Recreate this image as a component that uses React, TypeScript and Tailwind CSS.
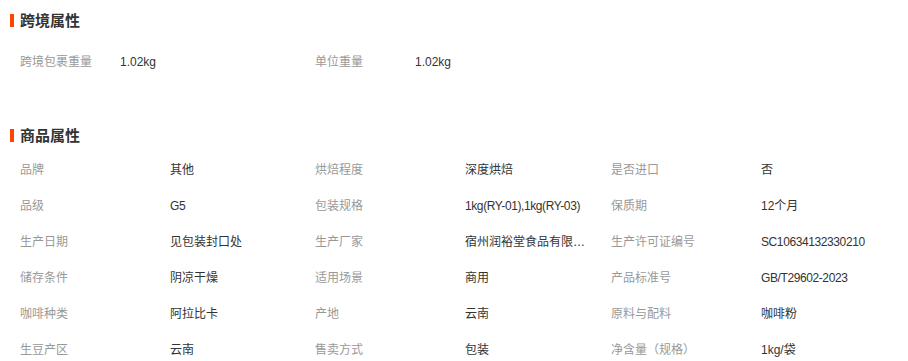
import React from "react";

const font = { fontFamily: '"Liberation Sans", "Noto Sans CJK SC", sans-serif' };

function Heading({ title }: { title: string }) {
  return (
    <div className="flex h-[30px] items-center pl-[10px]">
      <div className="h-[13px] w-[4px] bg-[#ff4400]" />
      <div className="ml-[6px] text-[15px] font-bold leading-none text-[#333]">{title}</div>
    </div>
  );
}

const cross: [string, string][] = [
  ["跨境包裹重量", "1.02kg"],
  ["单位重量", "1.02kg"],
];

const goods: [string, string][] = [
  ["品牌", "其他"],
  ["烘焙程度", "深度烘焙"],
  ["是否进口", "否"],
  ["品级", "G5"],
  ["包装规格", "1kg(RY-01),1kg(RY-03)"],
  ["保质期", "12个月"],
  ["生产日期", "见包装封口处"],
  ["生产厂家", "宿州润裕堂食品有限公司"],
  ["生产许可证编号", "SC10634132330210"],
  ["储存条件", "阴凉干燥"],
  ["适用场景", "商用"],
  ["产品标准号", "GB/T29602-2023"],
  ["咖啡种类", "阿拉比卡"],
  ["产地", "云南"],
  ["原料与配料", "咖啡粉"],
  ["生豆产区", "云南"],
  ["售卖方式", "包装"],
  ["净含量（规格）", "1kg/袋"],
];

export default function App() {
  return (
    <div className="h-[361px] w-[908px] overflow-hidden bg-white pt-[5px]" style={font}>
      <Heading title="跨境属性" />
      <div className="mt-[9px] grid grid-cols-[295px_295px] pl-[20px]">
        {cross.map(([k, v]) => (
          <div key={k} className="flex h-[36px] items-center text-[12px]">
            <div className="w-[100px] shrink-0 text-[#999]">{k}</div>
            <div className="text-[#333]">{v}</div>
          </div>
        ))}
      </div>
      <div className="mt-[40px]">
        <Heading title="商品属性" />
      </div>
      <div className="mt-[2px] grid grid-cols-[295px_296px_297px] pl-[20px]">
        {goods.map(([k, v]) => {
          const latin = /^[\x00-\x7f]+$/.test(v);
          return (
            <div key={k} className="flex h-[36px] items-center text-[12px]">
              <div className="w-[150px] shrink-0 text-[#999]">{k}</div>
              <div
                className={
                  latin
                    ? "whitespace-nowrap tracking-[-0.4px] text-[#333]"
                    : "max-w-[125px] overflow-hidden text-ellipsis whitespace-nowrap text-[#333]"
                }
              >
                {v}
              </div>
            </div>
          );
        })}
      </div>
    </div>
  );
}
